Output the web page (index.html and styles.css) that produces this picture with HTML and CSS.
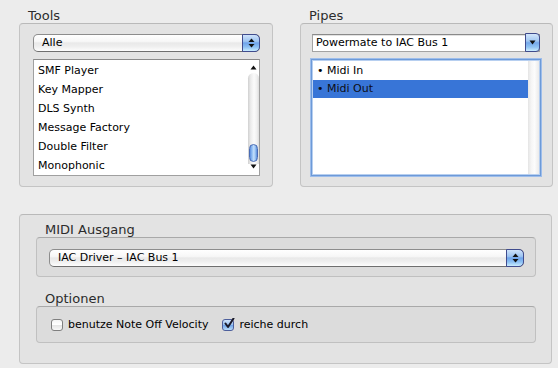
FILE: index.html
```html
<!DOCTYPE html>
<html>
<head>
<meta charset="utf-8">
<link rel="stylesheet" href="styles.css">
</head>
<body>
<div class="window">
  <div class="top">
    <section class="col col-tools">
      <div class="label">Tools</div>
      <div class="box box-tools">
        <div class="popup aqua">
          <span class="ptext">Alle</span>
          <span class="pbtn">
            <svg width="7" height="10" viewBox="0 0 7 10"><path d="M3.5 0.5 L6.5 4 L0.5 4 Z" fill="#111"/><path d="M0.5 6 L6.5 6 L3.5 9.5 Z" fill="#111"/></svg>
          </span>
        </div>
        <div class="list list-tools">
          <ul class="items">
            <li>SMF Player</li>
            <li>Key Mapper</li>
            <li>DLS Synth</li>
            <li>Message Factory</li>
            <li>Double Filter</li>
            <li>Monophonic</li>
          </ul>
          <div class="vscroll">
            <div class="arrow arrow-up"><svg width="7" height="5" viewBox="0 0 7 5"><path d="M3.5 0.5 L6.5 4.5 L0.5 4.5 Z" fill="#111"/></svg></div>
            <div class="track">
              <div class="thumb"></div>
            </div>
            <div class="arrow arrow-down"><svg width="7" height="5" viewBox="0 0 7 5"><path d="M0.5 0.5 L6.5 0.5 L3.5 4.5 Z" fill="#111"/></svg></div>
          </div>
        </div>
      </div>
    </section>
    <section class="col col-pipes">
      <div class="label">Pipes</div>
      <div class="box box-pipes">
        <div class="popup combo">
          <span class="ptext">Powermate to IAC Bus 1</span>
          <span class="cbtn">
            <svg width="7" height="5" viewBox="0 0 7 5"><path d="M0.5 0.5 L6.5 0.5 L3.5 4.5 Z" fill="#111"/></svg>
          </span>
        </div>
        <div class="list list-pipes">
          <ul class="items pipes-items">
            <li><span class="bullet">•</span>Midi In</li>
            <li class="selected"><span class="bullet">•</span>Midi Out</li>
          </ul>
          <div class="ptrack"></div>
        </div>
      </div>
    </section>
  </div>
  <div class="box box-bottom">
    <div class="label">MIDI Ausgang</div>
    <div class="inner inner-midi">
      <div class="popup aqua">
        <span class="ptext">IAC Driver – IAC Bus 1</span>
        <span class="pbtn">
          <svg width="7" height="10" viewBox="0 0 7 10"><path d="M3.5 0.5 L6.5 4 L0.5 4 Z" fill="#111"/><path d="M0.5 6 L6.5 6 L3.5 9.5 Z" fill="#111"/></svg>
        </span>
      </div>
    </div>
    <div class="label label-opt">Optionen</div>
    <div class="inner inner-opt">
      <label class="check"><span class="cb"></span>benutze Note Off Velocity</label>
      <label class="check"><span class="cb cb-on"><svg width="12" height="12" viewBox="0 0 12 12"><path d="M2.5 5.5 L5 9 L10.5 0.5" fill="none" stroke="#1a1a2a" stroke-width="2" stroke-linecap="round" stroke-linejoin="round"/></svg></span>reiche durch</label>
    </div>
  </div>
</div>
</body>
</html>
```

FILE: styles.css
```css
html, body {
  margin: 0;
  padding: 0;
}
body {
  background: #ececec;
  font-family: "DejaVu Sans", "Liberation Sans", sans-serif;
  font-size: 11px;
  color: #000;
  width: 558px;
  height: 368px;
  overflow: hidden;
}
.window {
  padding-top: 8px;
}
.top {
  display: flex;
  gap: 27px;
  padding-left: 19px;
}
.col-tools { width: 254px; }
.col-pipes { width: 253px; }

.label {
  font-size: 13px;
  line-height: 15px;
  color: #2c2c2c;
  padding-left: 9px;
}

.box {
  background: #e3e3e3;
  border: 1px solid #c4c4c4;
  border-top-color: #b9b9b9;
  border-radius: 4px;
  box-sizing: border-box;
}
.box-tools {
  height: 164px;
  padding: 10px 12px 10px 13px;
  display: flex;
  flex-direction: column;
  gap: 7px;
}
.box-pipes {
  height: 164px;
  padding: 10px 12px 10px 11px;
  display: flex;
  flex-direction: column;
  gap: 7px;
}

/* popups */
.popup {
  height: 18px;
  box-sizing: border-box;
  display: flex;
  align-items: center;
  flex: none;
}
.aqua {
  border: 1px solid #8d8d8d;
  border-bottom-color: #6f6f6f;
  border-radius: 5px;
  background: linear-gradient(#ffffff 0%, #f7f7f7 40%, #e9e9e9 50%, #eeeeee 70%, #fdfdfd 100%);
}
.ptext {
  flex: 1;
  padding-left: 8px;
  line-height: 16px;
  white-space: nowrap;
}
.pbtn {
  width: 18px;
  height: 18px;
  margin: -1px -1px -1px 0;
  box-sizing: border-box;
  border: 1px solid #404c8e;
  border-radius: 0 5px 5px 0;
  background: linear-gradient(#cfe3fb 0%, #9cc3f1 40%, #6ea3ea 50%, #8cc0f3 75%, #c9ecff 100%);
  display: flex;
  align-items: center;
  justify-content: center;
}
.combo {
  border: 1px solid #a3a3a3;
  border-top-color: #8a8a8a;
  background: #fff;
  box-shadow: inset 0 1px 0 #e2e2e2;
}
.combo .ptext {
  padding-left: 3px;
}
.cbtn {
  width: 15px;
  height: 19px;
  margin: -2px -1px -1px 0;
  box-sizing: border-box;
  border: 1px solid #3f4b8c;
  border-radius: 0 4px 4px 0;
  background: linear-gradient(#d3e6fb 0%, #a3c8f2 40%, #74a8ea 52%, #92c4f3 78%, #cdeeff 100%);
  display: flex;
  align-items: center;
  justify-content: center;
}

/* lists */
.list {
  height: 117px;
  box-sizing: border-box;
  background: #fff;
  display: flex;
  flex: none;
}
.list-tools {
  border: 1px solid #a0a0a0;
  border-top-color: #8a8a8a;
}
.items {
  list-style: none;
  margin: 0;
  padding: 1px 0 0 0;
  flex: 1;
}
.list-tools .items li {
  height: 19px;
  line-height: 19px;
  padding-left: 4px;
}
.vscroll {
  width: 11px;
  display: flex;
  flex-direction: column;
  background: #fff;
}
.arrow {
  height: 10px;
  display: flex;
  justify-content: center;
  align-items: center;
  flex: none;
}
.arrow-up { align-items: flex-end; }
.arrow-down { align-items: flex-start; height: 11px; }
.track {
  flex: 1;
  margin-top: 3px;
  border-radius: 6px 6px 0 0;
  background: linear-gradient(to right, #d0d0d0, #ececec 25%, #fbfbfb 55%, #f0f0f0 80%, #dcdcdc);
  display: flex;
  flex-direction: column;
  justify-content: flex-end;
  padding-bottom: 2px;
}
.thumb {
  height: 18px;
  margin: 0 1px;
  border-radius: 5px;
  border: 1px solid #4a6cb5;
  box-sizing: border-box;
  background: linear-gradient(to right, #5c8fe0, #9cc6f6 35%, #c6e0fb 55%, #8cb9f0 80%, #5a8ad8);
}

.list-pipes {
  margin: 0 -1px;
  border: 1px solid #6d9ad8;
  box-shadow: 0 0 0 1px #9dbdeb, inset 0 0 0 1px #b7cff0;
  padding: 1px;
}
.pipes-items li {
  height: 18px;
  line-height: 18px;
  padding-left: 4px;
}
.pipes-items .bullet {
  display: inline-block;
  width: 10px;
}
.pipes-items li.selected {
  background: #3875d7;
  color: #0d0d14;
}
.ptrack {
  width: 11px;
  background: linear-gradient(to right, #e4e4e4, #f5f5f5 30%, #fcfcfc 60%, #eaeaea);
}

/* bottom */
.box-bottom {
  margin: 27px 6px 0 19px;
  width: 533px;
  padding: 7px 15px 20px 16px;
}
.inner {
  background: #dcdcdc;
  border: 1px solid #c0c0c0;
  border-top-color: #a9a9a9;
  border-radius: 4px;
  box-sizing: border-box;
}
.inner-midi {
  height: 40px;
  padding: 11px 11px 9px 12px;
}
.label-opt {
  margin-top: 14px;
}
.inner-opt {
  height: 37px;
  display: flex;
  align-items: center;
  padding: 1px 0 0 14px;
  gap: 14px;
}
.check {
  display: flex;
  align-items: center;
  gap: 5px;
  line-height: 14px;
}
.cb {
  width: 12px;
  height: 12px;
  box-sizing: border-box;
  border: 1px solid #7f7f7f;
  border-radius: 3px;
  background: linear-gradient(#f4f4f4, #ffffff 45%, #e6e6e6 55%, #f8f8f8);
  display: inline-block;
  position: relative;
}
.cb-on {
  border-color: #4d5f9c;
  background: linear-gradient(#cfe3fb, #9cc3f1 45%, #74a8ea 55%, #b8dcfa);
}
.cb-on svg {
  position: absolute;
  left: 0;
  top: -2px;
}
```
